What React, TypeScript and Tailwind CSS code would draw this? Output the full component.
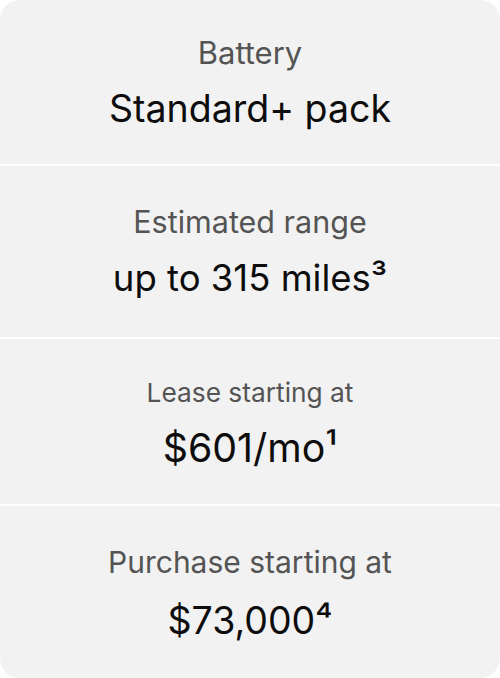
const specs = [
  {
    label: 'Battery',
    value: 'Standard+ pack',
    sup: '',
    height: 'h-[164px]',
    gap: 'gap-[22px]',
    labelSize: 'text-[31px]',
    valueSize: 'text-[37.5px]',
  },
  {
    label: 'Estimated range',
    value: 'up to 315 miles',
    sup: '³',
    height: 'h-[171px]',
    gap: 'gap-[23px]',
    labelSize: 'text-[30.5px]',
    valueSize: 'text-[36.5px]',
  },
  {
    label: 'Lease starting at',
    value: '$601/mo',
    sup: '¹',
    height: 'h-[165px] pt-[4px]',
    gap: 'gap-[21px]',
    labelSize: 'text-[26.3px]',
    valueSize: 'text-[39.3px]',
  },
  {
    label: 'Purchase starting at',
    value: '$73,000',
    sup: '⁴',
    height: 'h-[172px] pt-[2px]',
    gap: 'gap-[25px]',
    labelSize: 'text-[30px]',
    valueSize: 'text-[37.5px]',
  },
];

function SpecRow({ label, value, sup, height, gap, labelSize, valueSize }: (typeof specs)[number]) {
  return (
    <div className={`flex flex-col items-center justify-center bg-[#f2f2f2] ${gap} ${height}`}>
      <div className={`${labelSize} leading-none text-[#545454]`}>{label}</div>
      <div className={`${valueSize} leading-none text-[#0d0d0d]`}>
        {value}
        {sup}
      </div>
    </div>
  );
}

export default function App() {
  return (
    <div className="w-[500px] h-[678px] bg-white font-['Inter',sans-serif]">
      <div className="flex flex-col gap-[2px] overflow-hidden rounded-[20px] bg-white">
        {specs.map((s) => (
          <SpecRow key={s.label} {...s} />
        ))}
      </div>
    </div>
  );
}
